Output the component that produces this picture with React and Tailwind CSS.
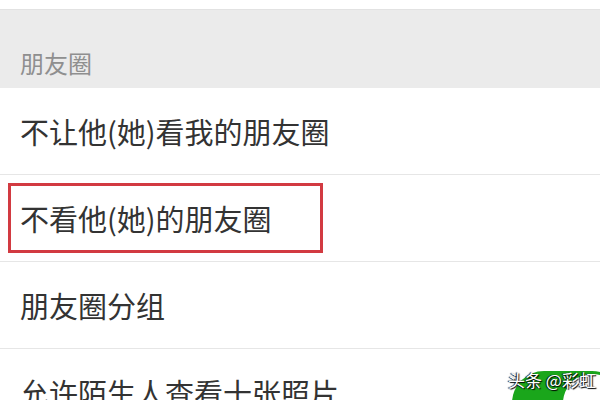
import React from 'react';

const font = { fontFamily: '"Noto Sans CJK SC", "Noto Sans", sans-serif' };

const Row = ({ children, right, boxed }) => (
  <div className="relative flex h-[87px] shrink-0 items-center border-b border-[#e6e6e6] pl-5 overflow-hidden">
    <span className="text-[29px] leading-none text-[#333]">{children}</span>
    {right}
    {boxed && (
      <div className="absolute left-2 top-2 h-[70px] w-[315px] border-[3px] border-[#d23a41]" />
    )}
  </div>
);

const App = () => {
  return (
    <div className="relative w-[600px] h-[400px] overflow-hidden bg-white flex flex-col" style={font}>
      <div className="h-[10px] shrink-0 bg-white border-b border-[#e2e2e2]" />
      <div className="h-[78px] shrink-0 bg-[#ebebeb] flex items-end pl-5 pb-[13px]">
        <span className="text-[24px] leading-none text-[#8f8f8f]">朋友圈</span>
      </div>
      <Row>不让他(她)看我的朋友圈</Row>
      <Row boxed>不看他(她)的朋友圈</Row>
      <Row>朋友圈分组</Row>
      <Row
        right={
          <div className="ml-auto -mr-[24px] self-start mt-[22px] h-[64px] w-[112px] shrink-0 rounded-full bg-[#1aa61b] flex items-center justify-end pr-[3px]">
            <div className="h-[58px] w-[58px] rounded-full bg-white" />
          </div>
        }
      >
        允许陌生人查看十张照片
      </Row>
      <div className="absolute left-[508px] top-[371px] text-[17px] leading-none text-white [text-shadow:1px_1px_1px_#000,-1px_0_1px_#000]">
        头条 @彩虹
      </div>
    </div>
  );
};

export default App;
